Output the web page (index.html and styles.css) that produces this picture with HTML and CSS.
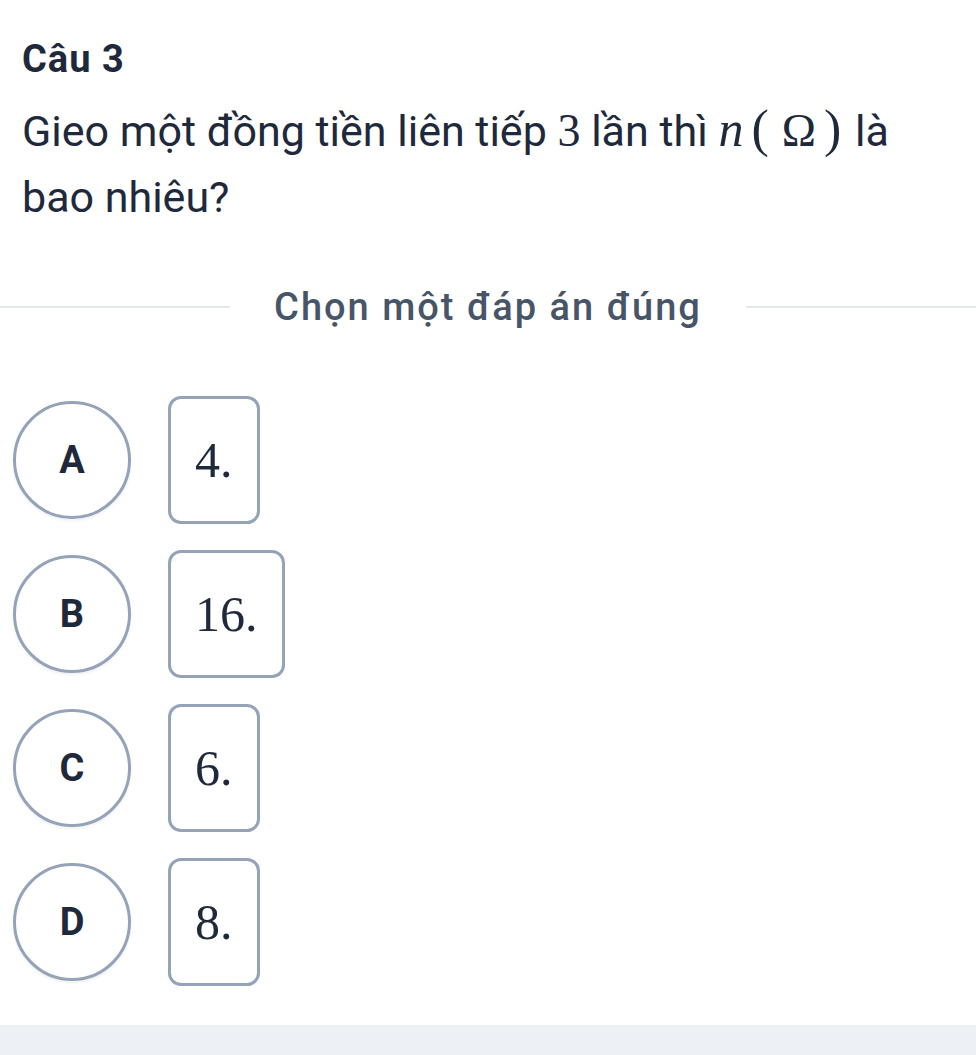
FILE: index.html
```html
<!DOCTYPE html>
<html lang="vi">
<head>
<meta charset="utf-8">
<title>Câu 3</title>
<link rel="stylesheet" href="styles.css">
</head>
<body>
<div class="page">
  <div class="content">
    <h2 class="title">Câu 3</h2>
    <p class="question">Gieo một đồng tiền liên tiếp <span class="num">3</span> lần thì <span class="math"><span class="mi">n</span><span class="mo">(</span><span class="omega">Ω</span><span class="mo close">)</span></span> là bao nhiêu?</p>
    <div class="divider">
      <span class="line"></span>
      <span class="divider-text">Chọn một đáp án đúng</span>
      <span class="line"></span>
    </div>
    <div class="options">
      <div class="option"><div class="letter">A</div><div class="answer">4.</div></div>
      <div class="option"><div class="letter">B</div><div class="answer">16.</div></div>
      <div class="option"><div class="letter">C</div><div class="answer">6.</div></div>
      <div class="option"><div class="letter">D</div><div class="answer">8.</div></div>
    </div>
  </div>
  <div class="footer-band"></div>
</div>
</body>
</html>
```

FILE: styles.css
```css
* { box-sizing: border-box; }
html, body { margin: 0; padding: 0; background: #ffffff; }
body { font-family: Roboto, "Noto Sans", sans-serif; color: #1e293b; }
.page { width: 976px; height: 1055px; display: flex; flex-direction: column; overflow: hidden; }
.content { flex: 1; }
.title {
  margin: 0;
  padding: 37px 0 0 22px;
  font-size: 38px;
  line-height: 44px;
  font-weight: 700;
  letter-spacing: 1px;
}
.question {
  margin: 17px 0 0 0;
  padding: 0 60px 0 22px;
  font-size: 43px;
  line-height: 66px;
  font-weight: 400;
}
.num { font-family: "Liberation Serif", serif; font-size: 46px; line-height: 1; }
.math { font-family: "Liberation Serif", serif; font-size: 46px; line-height: 1; }
.mi { font-style: italic; font-size: 50px; margin-right: 8px; }
.mo { font-size: 52px; font-weight: 300; }
.omega { margin: 0 8px 0 13px; }
.close { margin-right: 3px; }
.divider {
  display: flex;
  align-items: center;
  margin-top: 55px;
  gap: 44px;
}
.line { flex: 1; height: 2px; background: #e2e8f0; }
.divider-text {
  font-size: 38px;
  font-weight: 500;
  color: #475569;
  line-height: 44px;
  letter-spacing: 2px;
}
.options {
  margin-top: 67px;
  padding-left: 13px;
  display: flex;
  flex-direction: column;
  gap: 26px;
}
.option { display: flex; align-items: center; gap: 37px; }
.letter {
  width: 118px;
  height: 118px;
  border: 3px solid #94a3b8;
  border-radius: 50%;
  display: flex;
  align-items: center;
  justify-content: center;
  font-size: 38px;
  font-weight: 700;
  color: #1e293b;
  box-shadow: 0 2px 3px rgba(15, 23, 42, 0.06);
}
.answer {
  height: 128px;
  padding: 0 24px;
  border: 3px solid #94a3b8;
  border-radius: 13px;
  display: flex;
  align-items: center;
  font-family: "Liberation Serif", serif;
  font-size: 50px;
  color: #1e293b;
}
.footer-band { height: 30px; background: #edf0f4; flex: none; }
```
